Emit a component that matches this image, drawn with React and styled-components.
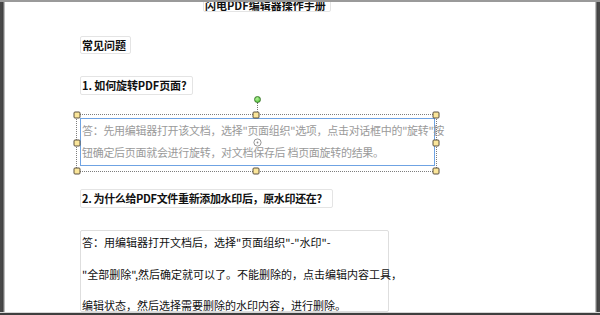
import React from "react";
import styled, { createGlobalStyle } from "styled-components";

const Global = createGlobalStyle`
  html, body { margin: 0; padding: 0; background: #3f3f3f; }
  body { width: 600px; height: 315px; overflow: hidden; }
  * { box-sizing: border-box; }
`;

const Frame = styled.div`
  width: 600px;
  height: 315px;
  display: flex;
  flex-direction: column;
  background: #3f3f3f;
`;

const Viewport = styled.div`
  flex: 0 0 313px;
  display: flex;
  background: #fff;
  overflow: hidden;
  border-top: 2px solid #9a9a9a;
  border-bottom: 1px solid #d6d6d6;
`;

const SideBar = styled.div`
  flex: 0 0 ${(p) => p.$w}px;
  background: linear-gradient(
    to ${(p) => (p.$side === "left" ? "right" : "left")},
    #3a3a3a 0px,
    #555 1px,
    #3a3a3a 2px,
    #4a4a4a 3px,
    #9c9c9c 4px,
    #e0e0e0 5px
  );
`;

const Sheet = styled.div`
  flex: 1;
  position: relative;
  display: flex;
  flex-direction: column;
  align-items: flex-start;
  padding-left: 75px;
  font-family: "Noto Sans CJK SC", "Noto Sans", sans-serif;
  color: #111;
`;

const HeadBox = styled.div`
  margin-top: ${(p) => p.$mt}px;
  margin-left: ${(p) => p.$ml || 0}px;
  border: 1px solid #e4e4e4;
  border-radius: 2px;
  padding: 0 ${(p) => p.$pr || 6}px 0 1px;
  font-size: 11px;
  font-weight: 700;
  line-height: ${(p) => p.$lh || 17}px;
  height: ${(p) => p.$h || 19}px;
  letter-spacing: ${(p) => p.$ls || 0}px;
  white-space: nowrap;
  background: #fff;
`;

const AnswerSelected = styled.div`
  position: relative;
  margin-top: 23px;
  width: 355px;
  height: 49px;
  border: 1px solid #6fa3e3;
  padding: 0 0 0 1px;
  font-size: 11px;
  line-height: 22px;
  color: #9a9a9a;
  white-space: nowrap;
`;

const Line = styled.div`
  height: ${(p) => p.$h || 22}px;
  line-height: 22px;
  letter-spacing: ${(p) => p.$ls || 0}px;
`;

const Dotted = styled.div`
  position: absolute;
  left: -5px;
  top: -5px;
  width: 361px;
  height: 58px;
  border: 1px dotted #7d7d7d;
  pointer-events: none;
`;

const Handle = styled.div`
  position: absolute;
  left: ${(p) => p.$x}px;
  top: ${(p) => p.$y}px;
  width: 7px;
  height: 7px;
  transform: translate(-50%, -50%);
  background: #fbe69a;
  border: 1px solid #5a5040;
  border-radius: 1.5px;
`;

const Rotator = styled.div`
  position: absolute;
  left: 176px;
  top: -17px;
  width: 1px;
  height: 10px;
  border-left: 1px dotted #777;
`;

const RotateKnob = styled.div`
  position: absolute;
  left: 173px;
  top: -23px;
  width: 7px;
  height: 7px;
  border-radius: 50%;
  background: radial-gradient(circle at 40% 35%, #b6f29a, #3fbf2a);
  border: 1px solid #3a7a2a;
`;

const CenterMark = styled.svg`
  position: absolute;
  left: 172px;
  top: 19px;
`;

const AnswerBox = styled.div`
  margin-top: 22px;
  width: 309px;
  height: 82px;
  border: 1px solid #dedede;
  border-radius: 2px;
  padding: 0 0 0 1px;
  font-size: 11px;
  color: #111;
  white-space: nowrap;
  display: flex;
  flex-direction: column;
  gap: 9.5px;
`;

export default function App() {
  const W = 359;
  const H = 56;
  const handles = [
    [0, 0], [W / 2, 0], [W, 0],
    [0, H / 2], [W, H / 2],
    [0, H], [W / 2, H], [W, H],
  ];
  return (
    <>
      <Global />
      <Frame>
        <Viewport>
          <SideBar $w={5} $side="left" />
          <Sheet>
            <HeadBox $mt={-5} $ml={123} $h={15} $lh={14} $pr={4}>闪电PDF编辑器操作手册</HeadBox>
            <HeadBox $mt={24} $h={18} $pr={4}>常见问题</HeadBox>
            <HeadBox $mt={22} $pr={5} $ls={-0.1}>1. 如何旋转PDF页面?</HeadBox>
            <AnswerSelected>
              <Line $ls={-0.3}>答：先用编辑器打开该文档，选择"页面组织"选项，点击对话框中的"旋转"按</Line>
              <Line $ls={-0.3}>钮确定后页面就会进行旋转，对文档保存后 档页面旋转的结果。</Line>
              <Dotted>
                {handles.map(([x, y], i) => (
                  <Handle key={i} $x={x - 0.5} $y={y - 0.5} />
                ))}
              </Dotted>
              <Rotator />
              <RotateKnob />
              <CenterMark width="9" height="9" viewBox="0 0 9 9">
                <circle cx="4.5" cy="4.5" r="3.6" fill="none" stroke="#8a8a8a" strokeWidth="0.9" />
                <circle cx="4.5" cy="4.5" r="0.9" fill="#8a8a8a" />
              </CenterMark>
            </AnswerSelected>
            <HeadBox $mt={23} $pr={10} $ls={-0.35}>2. 为什么给PDF文件重新添加水印后，原水印还在?</HeadBox>
            <AnswerBox>
              <Line>答：用编辑器打开文档后，选择"页面组织"-"水印"-</Line>
              <Line>"全部删除",然后确定就可以了。不能删除的，点击编辑内容工具，</Line>
              <Line>编辑状态，然后选择需要删除的水印内容，进行删除。</Line>
            </AnswerBox>
          </Sheet>
          <SideBar $w={5} $side="right" />
        </Viewport>
      </Frame>
    </>
  );
}
